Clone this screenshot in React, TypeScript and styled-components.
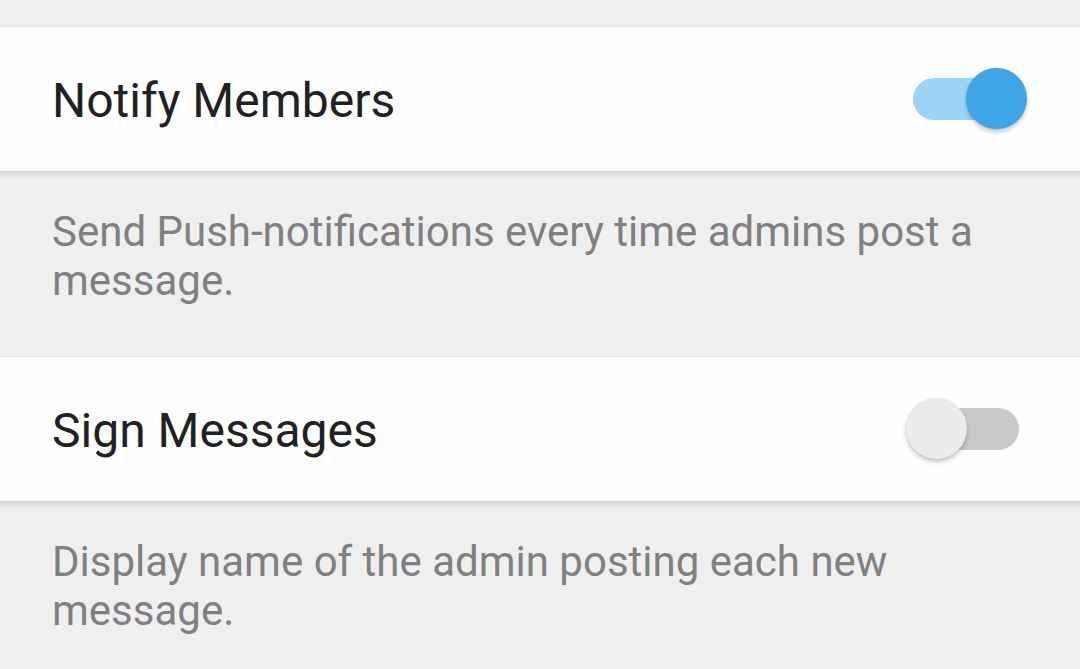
import React, { useState } from "react";
import styled, { createGlobalStyle } from "styled-components";

const Global = createGlobalStyle`
  html, body { margin: 0; padding: 0; background: #efefef; }
  body { font-family: Roboto, "Noto Sans", "Liberation Sans", sans-serif; overflow: hidden; }
`;

const Page = styled.div`
  width: 1080px;
  height: 669px;
  background: #efefef;
  display: flex;
  flex-direction: column;
  padding-top: 26px;
  box-sizing: border-box;
  overflow: hidden;
`;

const Row = styled.div`
  position: relative;
  flex-shrink: 0;
  height: 144px;
  background: #fefefe;
  border-top: 1px solid #e2e2e2;
  display: flex;
  align-items: center;
  justify-content: space-between;
  padding: 0 53px 0 52px;
  box-sizing: content-box;
  &::after {
    content: "";
    position: absolute;
    left: 0;
    right: 0;
    top: 100%;
    height: 7px;
    background: linear-gradient(#d2d2d2, rgba(239, 239, 239, 0));
  }
`;

const Title = styled.div`
  font-size: 48px;
  padding-top: 3px;
  color: #212121;
`;

const Description = styled.div`
  flex-shrink: 0;
  padding: 36px 52px 51px;
  font-size: 42px;
  line-height: 49px;
  color: #808080;
`;

const SwitchBox = styled.button`
  position: relative;
  width: 121px;
  height: 62px;
  border: none;
  background: none;
  padding: 0;
  cursor: pointer;
`;

const Track = styled.span<{ $on: boolean }>`
  position: absolute;
  left: 7px;
  top: 10px;
  width: 106px;
  height: 42px;
  border-radius: 21px;
  background: ${(p) => (p.$on ? "#9bd4f6" : "#c9c9c9")};
`;

const Thumb = styled.span<{ $on: boolean }>`
  position: absolute;
  top: 0;
  left: ${(p) => (p.$on ? "60px" : "0px")};
  width: 61px;
  height: 61px;
  border-radius: 50%;
  background: ${(p) => (p.$on ? "#3ea6e6" : "#ebebeb")};
  box-shadow: 0 3px 4px rgba(0, 0, 0, 0.22), 0 0 1px rgba(0, 0, 0, 0.12);
`;

function Switch({ on, onToggle }: { on: boolean; onToggle: () => void }) {
  return (
    <SwitchBox onClick={onToggle} aria-pressed={on}>
      <Track $on={on} />
      <Thumb $on={on} />
    </SwitchBox>
  );
}

export default function App() {
  const [notify, setNotify] = useState(true);
  const [sign, setSign] = useState(false);
  return (
    <>
      <Global />
      <Page>
        <Row>
          <Title>Notify Members</Title>
          <Switch on={notify} onToggle={() => setNotify(!notify)} />
        </Row>
        <Description>
          Send Push-notifications every time admins post a message.
        </Description>
        <Row>
          <Title>Sign Messages</Title>
          <Switch on={sign} onToggle={() => setSign(!sign)} />
        </Row>
        <Description>
          Display name of the admin posting each new message.
        </Description>
      </Page>
    </>
  );
}
